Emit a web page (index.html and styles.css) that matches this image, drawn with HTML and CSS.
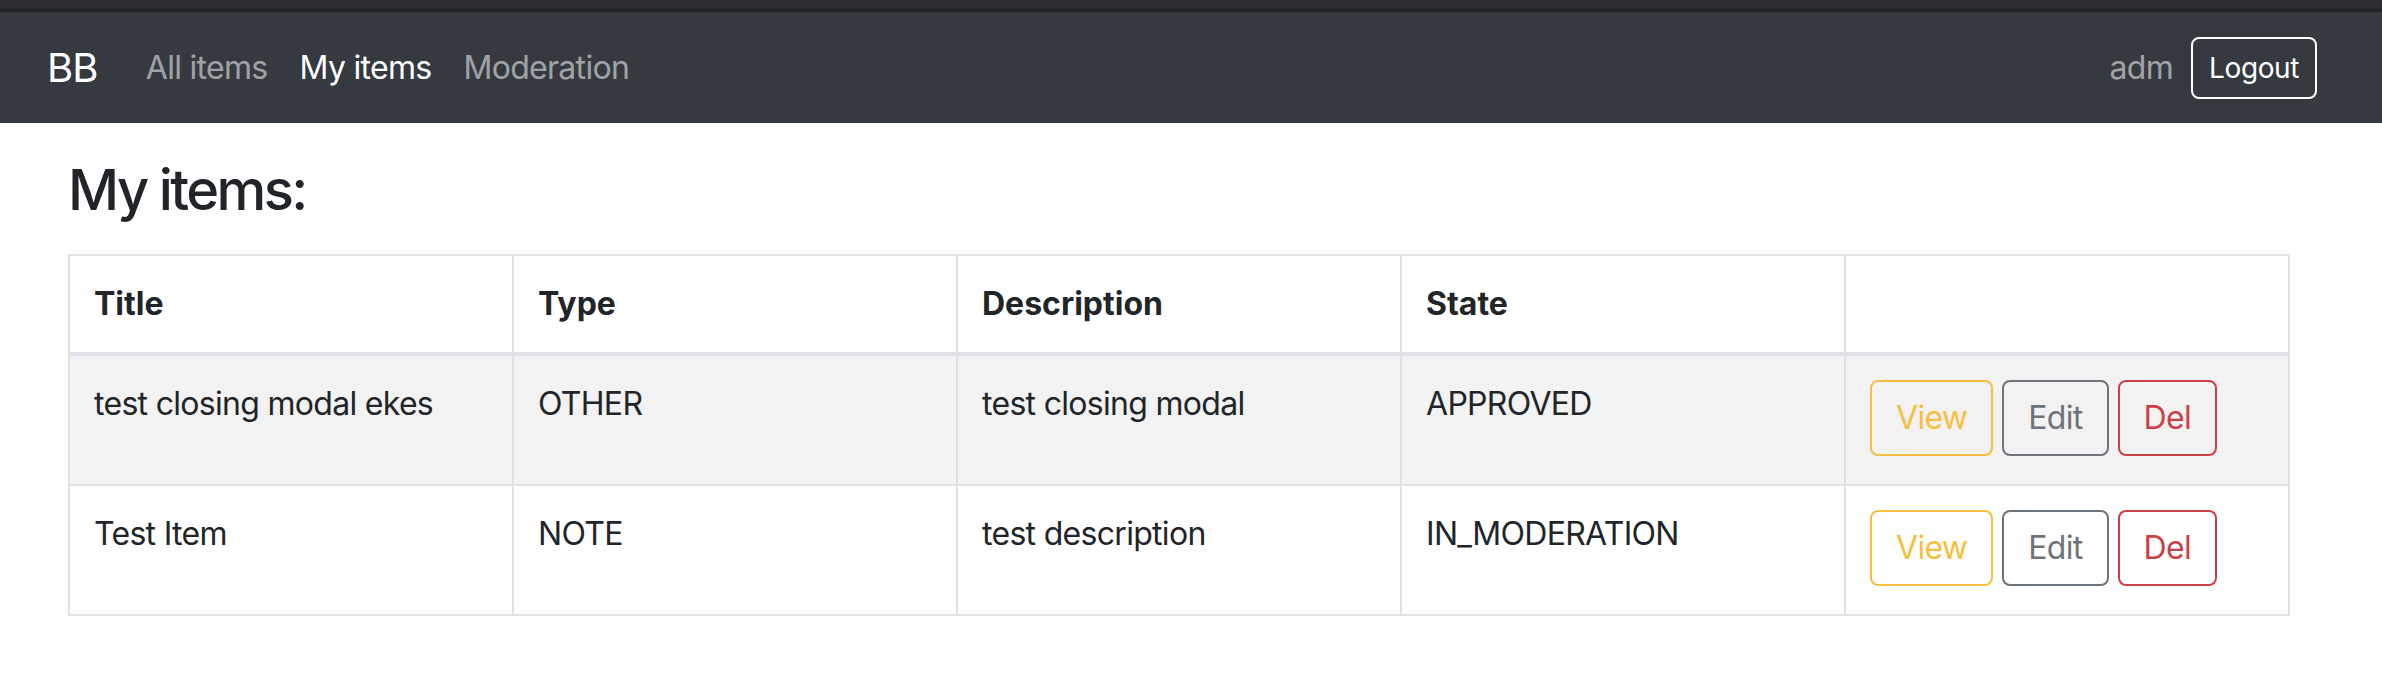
FILE: index.html
```html
<!DOCTYPE html>
<html lang="en">
<head>
<meta charset="utf-8">
<title>My items</title>
<link rel="stylesheet" href="styles.css">
</head>
<body>
<div class="topstrip"></div>
<nav class="navbar">
  <a class="brand" href="#">BB</a>
  <div class="nav-links">
    <a class="nav-link" href="#">All items</a>
    <a class="nav-link active" href="#">My items</a>
    <a class="nav-link" href="#">Moderation</a>
  </div>
  <div class="nav-user">
    <span class="username">adm</span>
    <button class="btn-logout" type="button">Logout</button>
  </div>
</nav>
<main class="content">
  <h3 class="page-title">My items:</h3>
  <table class="items">
    <thead>
      <tr>
        <th>Title</th>
        <th>Type</th>
        <th>Description</th>
        <th>State</th>
        <th></th>
      </tr>
    </thead>
    <tbody>
      <tr class="striped">
        <td>test closing modal ekes</td>
        <td>OTHER</td>
        <td>test closing modal</td>
        <td>APPROVED</td>
        <td>
          <div class="actions">
            <button class="btn btn-view" type="button">View</button>
            <button class="btn btn-edit" type="button">Edit</button>
            <button class="btn btn-del" type="button">Del</button>
          </div>
        </td>
      </tr>
      <tr>
        <td>Test Item</td>
        <td>NOTE</td>
        <td>test description</td>
        <td>IN_MODERATION</td>
        <td>
          <div class="actions">
            <button class="btn btn-view" type="button">View</button>
            <button class="btn btn-edit" type="button">Edit</button>
            <button class="btn btn-del" type="button">Del</button>
          </div>
        </td>
      </tr>
    </tbody>
  </table>
</main>
</body>
</html>
```
FILE: styles.css
```css
* {
  box-sizing: border-box;
}

html, body {
  margin: 0;
  padding: 0;
  background: #ffffff;
}

body {
  font-family: Inter, "Noto Sans", "Liberation Sans", sans-serif;
  color: #212529;
  font-size: 32px;
  line-height: 48px;
  letter-spacing: -0.7px;
}

.topstrip {
  height: 12px;
  background: #2b2d31;
  border-bottom: 3px solid #222427;
}

.navbar {
  height: 111px;
  background: #343a40;
  display: flex;
  align-items: center;
  padding: 0 65px 0 47px;
}

.brand {
  font-size: 40px;
  line-height: 60px;
  color: #ffffff;
  text-decoration: none;
  margin-right: 32px;
  letter-spacing: -0.8px;
}

.nav-links {
  display: flex;
  align-items: center;
}

.nav-link {
  font-size: 32px;
  line-height: 48px;
  padding: 0 16px;
  color: rgba(255, 255, 255, 0.55);
  text-decoration: none;
}

.nav-link.active {
  color: #ffffff;
}

.nav-user {
  margin-left: auto;
  display: flex;
  align-items: center;
}

.username {
  color: rgba(255, 255, 255, 0.55);
  font-size: 32px;
  line-height: 48px;
  margin-right: 18px;
}

.btn-logout {
  font-family: inherit;
  font-size: 28px;
  line-height: 42px;
  letter-spacing: -0.4px;
  padding: 8px 16px;
  border: 2px solid #ffffff;
  border-radius: 8px;
  background: transparent;
  color: #ffffff;
}

.content {
  padding: 34px 0 0 68px;
}

.page-title {
  margin: 0 0 30px 0;
  font-size: 56px;
  line-height: 67px;
  font-weight: 500;
  letter-spacing: -2.6px;
  color: #212529;
}

.items {
  width: 2222px;
  table-layout: fixed;
  border-collapse: separate;
  border-spacing: 0;
  border-top: 2px solid #dee2e6;
  border-left: 2px solid #dee2e6;
}

.items th,
.items td {
  padding: 24px;
  text-align: left;
  vertical-align: top;
  border-right: 2px solid #dee2e6;
  border-bottom: 2px solid #dee2e6;
  font-size: 32px;
  line-height: 48px;
}

.items th {
  font-weight: 700;
  letter-spacing: 0;
  border-bottom-width: 4px;
}

.items tr.striped td {
  background: #f2f2f2;
}

.actions {
  display: flex;
  gap: 9px;
  padding-bottom: 4px;
}

.btn {
  font-family: inherit;
  font-size: 32px;
  line-height: 48px;
  letter-spacing: -0.7px;
  padding: 12px 24px;
  border: 2px solid;
  border-radius: 8px;
  background: transparent;
}

.btn-view {
  color: #f5bf3f;
  border-color: #f5bf3f;
}

.btn-edit {
  color: #6c737b;
  border-color: #6c737b;
}

.btn-del {
  color: #cc3f47;
  border-color: #cc3f47;
}
```
